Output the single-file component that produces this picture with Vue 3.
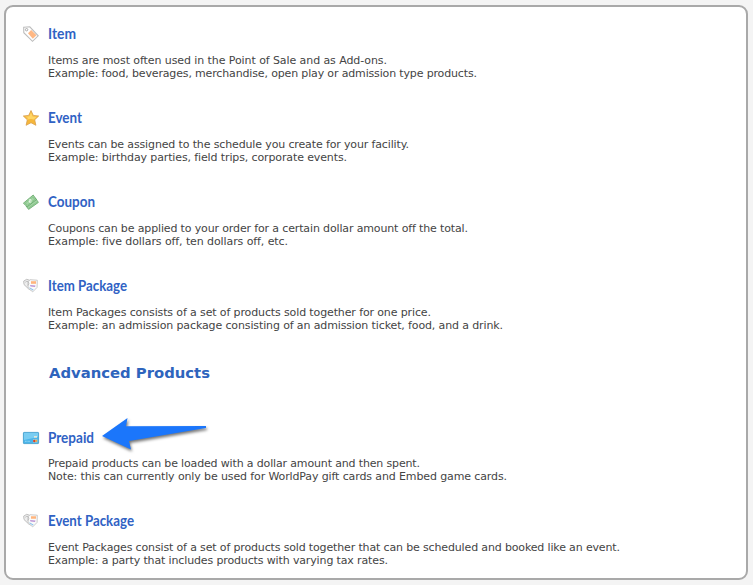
<script setup>
const basic = [
  { icon: 'tag', title: 'Item', width: 28, lines: [['Items are most often used in the Point of Sale and as Add-ons.', 339], ['Example: food, beverages, merchandise, open play or admission type products.', 429]] },
  { icon: 'star', title: 'Event', width: 34, lines: [['Events can be assigned to the schedule you create for your facility.', 361], ['Example: birthday parties, field trips, corporate events.', 299]] },
  { icon: 'cash', title: 'Coupon', width: 47, lines: [['Coupons can be applied to your order for a certain dollar amount off the total.', 420], ['Example: five dollars off, ten dollars off, etc.', 240]] },
  { icon: 'tags', title: 'Item Package', width: 79, lines: [['Item Packages consists of a set of products sold together for one price.', 383], ['Example: an admission package consisting of an admission ticket, food, and a drink.', 455]] },
]
const advanced = [
  { icon: 'card', title: 'Prepaid', width: 46, arrow: true, lines: [['Prepaid products can be loaded with a dollar amount and then spent.', 372], ['Note: this can currently only be used for WorldPay gift cards and Embed game cards.', 459]] },
  { icon: 'tags', title: 'Event Package', width: 86, lines: [['Event Packages consist of a set of products sold together that can be scheduled and booked like an event.', 572], ['Example: a party that includes products with varying tax rates.', 340]] },
]
const groups = [{ items: basic }, { heading: 'Advanced Products', items: advanced }]
</script>

<template>
  <main class="panel">
    <section v-for="(group, g) in groups" :key="g" class="group">
      <h2 v-if="group.heading" class="heading">
        <svg width="180" height="24"><text x="1" y="17.5" textLength="161" lengthAdjust="spacingAndGlyphs">{{ group.heading }}</text></svg>
      </h2>
      <article v-for="item in group.items" :key="item.title" class="product">
        <svg class="icon" width="16" height="16" viewBox="0 0 16 16">
          <g v-if="item.icon === 'tag'">
            <path d="M.7 1.2 6.8.8 15.2 9.8 9.5 15.3.8 6.7Z" fill="#fff" stroke="#bdbdbd" stroke-width="1.1" />
            <circle cx="3.6" cy="3.7" r="1.2" fill="#fff" stroke="#aaa" />
            <path d="m5 7.2 3.2-3.2 5.3 5.3-3.7 3.5Z" fill="#ffb884" />
          </g>
          <g v-else-if="item.icon === 'star'">
            <path d="m8 .5 2.3 4.9 5.4.6-4 3.8 1.2 5.5L8 12.7l-4.9 2.6 1.2-5.5L.3 6l5.4-.6Z" fill="#f6b73a" stroke="#d9a04c" stroke-width=".8" />
            <path d="m8 2.2 1.7 4.2 4.3.4-3.3 2.8L8 9l-4.6.4L5.2 8 2 6.7l4.4-.4Z" fill="#ffd565" />
          </g>
          <g v-else-if="item.icon === 'cash'">
            <path d="m4.2 11 8.3-6.8 2.9 4.2-9.8 7L3 12Z" fill="#a1d3a2" stroke="#65a869" stroke-width=".8" />
            <path d="M.4 9.2 10.2 1l3.2 4.6-9.2 7.2Z" fill="#a2d5a3" stroke="#62a566" stroke-width=".8" />
            <path d="m2.2 9.2 7.7-6.3 1.8 2.6-7.2 5.6Z" fill="none" stroke="#6db171" stroke-width=".5" />
            <ellipse cx="7.1" cy="6.9" rx="1.4" ry="1.9" fill="#e6f6e4" />
            <path d="m6.9 6.2.7 1.4M5.6 14l8.5-6" fill="none" stroke="#74b478" stroke-width=".5" />
          </g>
          <g v-else-if="item.icon === 'tags'">
            <path d="m.7 3.1 3-1.8 6 2-1.2 9L5.7 11 1 6.5Z" fill="#eee" stroke="#b8b8b8" stroke-width=".9" />
            <path d="m4.8 4.2 2.3-2.5 7.2.5-.2 7.2-4.4 4.5-4.5-4Z" fill="#fafafa" stroke="#bfbfbf" stroke-width=".8" />
            <path d="M2.3 4.3 4 3l2 2-1 2.6" fill="none" stroke="#aaa" stroke-width=".7" />
            <path d="M8 3.2h5v2.6H8Z" fill="#ffb47c" />
            <path d="m7 7.1 5.5.4-.5 1.6-4.5-.5Z" fill="#bd95d4" />
            <path d="m6.4 9.2 4.3 2.5-.9.8-3.2-2.2Z" fill="#80bdec" />
          </g>
          <g v-else>
            <rect x=".4" y="2.4" width="15.2" height="11.2" rx=".6" fill="#4bb5ea" stroke="#3c9bca" stroke-width=".8" />
            <path d="M1 3h14v4L1 10Z" fill="#79cdf2" />
            <path d="M2 11.3h5" stroke="#a7def5" stroke-width=".8" stroke-dasharray="1 .4" />
            <rect x="11" y="6" width="3" height="1.7" fill="#e2e6d8" />
            <rect x="10" y="9.3" width="4.4" height="3.2" fill="#a8cfd6" />
            <circle cx="11.3" cy="10.9" r="1.25" fill="#dc3e29" /><circle cx="13.2" cy="10.9" r="1.1" fill="#e9a94c" />
          </g>
        </svg>
        <div class="content">
          <h3 class="title">
            <svg :width="item.width + 3" height="22"><text x="0" y="17.4" :textLength="item.width" lengthAdjust="spacingAndGlyphs">{{ item.title }}</text></svg>
            <svg v-if="item.arrow" class="arrow" width="112" height="40" viewBox="0 0 112 40">
              <path d="M2 19 27.5 1 26 9.2 106 9V11L29 24l2 8.5Z" fill="#1b76fb" />
            </svg>
          </h3>
          <svg class="description" :class="{ raised: item.arrow }" width="620" height="28">
            <text v-for="(line, n) in item.lines" :key="line[0]" x="0" :y="11 + n * 13" :textLength="line[1]">{{ line[0] }}</text>
          </svg>
        </div>
      </article>
    </section>
  </main>
</template>

<style>
body { background: #f4f4f4; overflow: hidden; }
</style>

<style scoped>
.panel { box-sizing: border-box; width: 744px; height: 575px; margin: 5px 0 0 4px; padding: 15px 17px 0; border: 2px solid #a9a9a9; border-radius: 9px; background: #fff; overflow: hidden; }
.product { display: grid; grid-template-columns: 16px 1fr; column-gap: 9px; height: 84px; }
.group:last-child .product { height: 83px; }
.icon { margin-top: 4px; }
svg { display: block; overflow: visible; }
h2, h3 { margin: 0; }
.title { position: relative; height: 31px; font: bold 15.5px/22px Lato, "Open Sans", sans-serif; fill: #3062c4; }
.description { font: 11px/13px "DejaVu Sans", sans-serif; font-variant-ligatures: none; fill: #444; }
.description.raised { margin-top: -1px; }
.heading { box-sizing: border-box; height: 68px; padding: 2px 0 0 25px; font: bold 14.5px/24px "DejaVu Sans", sans-serif; fill: #2e64bd; }
.arrow { position: absolute; left: 52px; top: -9px; filter: drop-shadow(1px 2px 1.5px rgb(0 0 0 / 55%)); }
</style>
